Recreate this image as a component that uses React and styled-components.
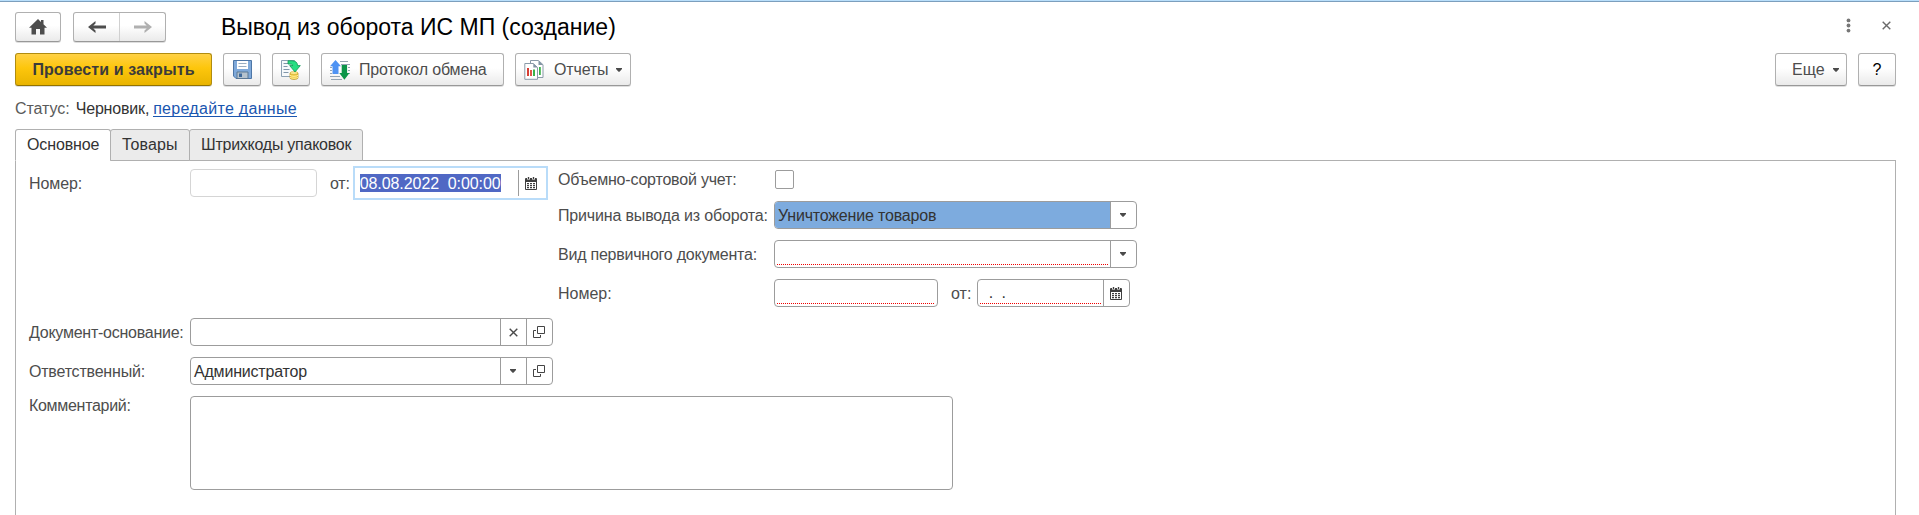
import React from "react";
import styled, { createGlobalStyle } from "styled-components";

const Global = createGlobalStyle`
  * { box-sizing: border-box; }
  body {
    margin: 0;
    background: #fff;
    overflow: hidden;
    font: 16px/20px "Liberation Sans", Arial, sans-serif;
    color: #4d4d4d;
  }
  svg { display: block; flex: none; }
`;

const Window = styled.main`
  display: flex;
  flex-direction: column;
  height: 515px;
  width: 1919px;
  padding: 0 23px 0 15px;
  border-top: 1px solid #b9dffb;
  box-shadow: inset 0 1px 0 #7c9fbd;
`;

const TitleBar = styled.header`
  display: flex;
  align-items: center;
  height: 30px;
  margin-top: 11px;
`;

const Title = styled.h1`
  flex: 1;
  margin: 0 0 0 55px;
  font-size: 23px;
  line-height: 30px;
  font-weight: 400;
  color: #000;
`;

const WindowActions = styled.div`
  display: flex;
  align-items: center;
  gap: 31px;
  padding: 0 5px 3px 0;
`;

const Button = styled.button`
  display: flex;
  align-items: center;
  justify-content: ${(p) => (p.$start ? "flex-start" : "center")};
  width: ${(p) => p.$w}px;
  height: ${(p) => p.$h || 33}px;
  padding: 0 0 0 ${(p) => p.$pl || 0}px;
  border: 1px solid #b0b0b0;
  border-bottom-color: #989898;
  border-radius: 3px;
  background: linear-gradient(#fff 45%, #eaeaea);
  box-shadow: 0 1px 0 #dedede;
  font: inherit;
  color: ${(p) => p.$color || "#4d4d4d"};
  white-space: nowrap;
`;

const PrimaryButton = styled(Button)`
  border-color: #b08c10;
  border-bottom-color: #937300;
  background: linear-gradient(#ffd145, #fdc60c 45%, #e9b400);
  font-weight: 700;
  color: #3b3b3b;
`;

const NavGroup = styled(Button)`
  margin-left: 12px;
`;

const NavHalf = styled.span`
  display: flex;
  flex: 1;
  height: 100%;
  align-items: center;
  justify-content: center;
  & + & { border-left: 1px solid #d0d0d0; }
`;

const Toolbar = styled.div`
  display: flex;
  gap: 11px;
  margin-top: 11px;
`;

const Spacer = styled.div`
  flex: 1;
`;

const Text = styled.span`
  letter-spacing: ${(p) => p.$ls || 0}px;
  margin: 0 ${(p) => p.$mr || 0}px 0 ${(p) => p.$ml || 0}px;
  white-space: pre;
`;

const Status = styled.div`
  display: flex;
  height: 20px;
  margin-top: 13px;
  color: #333;
`;

const StatusLabel = styled(Text)`
  color: #5a5a5a;
`;

const Link = styled.a`
  height: 18px;
  border-bottom: 1px solid #1a56b0;
  color: #1a56b0;
`;

const Tabs = styled.nav`
  display: flex;
  height: 32px;
  margin-top: 10px;
  position: relative;
  z-index: 1;
`;

const Tab = styled.div`
  width: ${(p) => p.$w}px;
  height: 32px;
  margin-right: -1px;
  padding: 5px 0 0 ${(p) => p.$pl}px;
  border: 1px solid #b0b0b0;
  border-bottom-color: ${(p) => (p.$active ? "#fff" : "#b0b0b0")};
  border-radius: 3px 3px 0 0;
  background: ${(p) => (p.$active ? "#fff" : "#ebebeb")};
  color: #333;
  white-space: nowrap;
`;

const Panel = styled.section`
  flex: 1;
  margin-top: -1px;
  padding-left: 12px;
  border: solid #b0b0b0;
  border-width: 1px 1px 0 1px;
`;

const Upper = styled.div`
  display: flex;
  height: 157px;
`;

const LeftColumn = styled.div`
  width: 530px;
  padding-top: 5px;
`;

const RightColumn = styled.div`
  display: flex;
  flex-direction: column;
  gap: 11px;
  padding-top: 8px;
`;

const Row = styled.div`
  display: flex;
  align-items: ${(p) => (p.$top ? "flex-start" : "center")};
  height: ${(p) => p.$h || 28}px;
  margin-bottom: ${(p) => p.$mb || 0}px;
`;

const Label = styled.label`
  width: ${(p) => p.$w}px;
  flex: none;
  padding: ${(p) => (p.$flat ? 0 : 2)}px 0 0 ${(p) => p.$pl || 0}px;
  white-space: nowrap;
  letter-spacing: ${(p) => p.$ls || 0}px;
`;

const FieldText = styled(Text)`
  padding-top: 2px;
`;

const Field = styled.div`
  display: flex;
  width: ${(p) => p.$w}px;
  height: ${(p) => p.$h || 28}px;
  border: 1px solid ${(p) => (p.$muted ? "#d5d5d5" : "#9c9c9c")};
  border-radius: 4px;
  overflow: hidden;
  color: #333;
`;

const Value = styled.div`
  flex: 1;
  display: flex;
  align-items: center;
  padding-left: 3px;
  background: ${(p) => (p.$selected ? "#7dabde" : "transparent")};
`;

const Required = styled(Value)`
  margin: 0 2px 2px;
  background: repeating-linear-gradient(90deg, #f00000 0 1px, #fff 1px 2px) bottom / 100% 1px no-repeat;
`;

const Addon = styled.span`
  display: flex;
  align-items: center;
  justify-content: center;
  width: 26px;
  padding-right: 1px;
  border-left: 1px solid #9c9c9c;
`;

const FocusedDate = styled.div`
  display: flex;
  align-items: center;
  width: 195px;
  height: 34px;
  padding-left: 5px;
  border: 2px solid #b9dcf9;
`;

const Selection = styled.span`
  width: 141px;
  height: 18px;
  line-height: 19px;
  background: #5068c4;
  color: #fff;
  white-space: pre;
  letter-spacing: -0.08px;
`;

const DateButton = styled.span`
  display: flex;
  align-items: center;
  height: 26px;
  margin-left: 17px;
  padding-left: 6px;
  border-left: 1px solid #9c9c9c;
`;

const Checkbox = styled.span`
  width: 19px;
  height: 19px;
  margin-left: 1px;
  border: 1px solid #9c9c9c;
  border-radius: 2px;
`;

const Caret = () => (
  <svg width="6" height="4" viewBox="0 0 6 4"><path d="M0 0h6v1L3.5 3.7h-1L0 1z" fill="#4a4a4a" /></svg>
);

const Cross = ({ color = "#4a4a4a" }) => (
  <svg width="9" height="9" viewBox="0 0 9 9">
    <path d="M.7.7l7.6 7.6M8.3.7L.7 8.3" stroke={color} strokeWidth="1.4" />
  </svg>
);

const OpenIcon = () => (
  <svg width="12" height="12" viewBox="0 0 12 12" fill="none" stroke="#444">
    <path d="M4.5.5h7v7h-7zM3 4.5H.5v7h7V9" />
  </svg>
);

const Calendar = () => (
  <svg width="12" height="13" viewBox="0 0 12 13">
    <path d="M1 1h10q1 0 1 1v10q0 1-1 1H1q-1 0-1-1V2q0-1 1-1z" fill="#3f3f3f" />
    <path d="M1 5h10v7H1z" fill="#fff" />
    <path d="M2 0h3v2.6H2zM7 0h3v2.6H7z" fill="#fff" />
    <path d="M2.8 0h1.4v2H2.8zM7.8 0h1.4v2H7.8z" fill="#3f3f3f" />
    <path d="M2 6h2v1.3H2zM5 6h2v1.3H5zM8 6h2v1.3H8zM2 8h2v1.3H2zM5 8h2v1.3H5zM8 8h2v1.3H8zM2 10h2v1.2H2zM5 10h2v1.2H5zM8 10h2v1.2H8z" fill="#3f3f3f" />
  </svg>
);

const Home = () => (
  <svg width="18" height="16" viewBox="0 0 18 16">
    <path d="M9 0l3 2.9V1h2.5v4.3L18 8.7H15.5V15.5H11V10H7v5.5H2.5V8.7H0z" fill="#4d4d4d" />
  </svg>
);

const Arrow = ({ right }) => (
  <svg width="18" height="14" viewBox="0 0 18 14">
    <path
      d="M7.5 1v2.4L5.3 5.6H18v2.8H5.3l2.2 2.2V13L0 7z"
      fill={right ? "#b0b0b0" : "#4d4d4d"}
      transform={right ? "matrix(-1 0 0 1 18 0)" : undefined}
    />
  </svg>
);

const Dots = () => (
  <svg width="5" height="15" viewBox="0 0 5 15" fill="#777">
    <circle cx="2.5" cy="2.4" r="1.9" /><circle cx="2.5" cy="7.5" r="1.9" /><circle cx="2.5" cy="12.6" r="1.9" />
  </svg>
);

const Save = () => (
  <svg width="19" height="19" viewBox="0 0 19 19">
    <path d="M.5.5h18v18H3L.5 16z" fill="#7fa9da" stroke="#4d76a6" />
    <path d="M4 1h11v8H4z" fill="#fff" />
    <path d="M5.5 3.5h8M5.5 6.5h8" stroke="#9aaec2" />
    <path d="M4 12h11v6.5H4z" fill="#b6c3ce" stroke="#5b7894" />
    <path d="M6 13.5h3V17H6z" fill="#3f6a9c" />
  </svg>
);

const Post = () => (
  <svg width="20" height="20" viewBox="0 0 20 20">
    <path d="M.5.5h13v16H.5z" fill="#f6f9fb" stroke="#8ca1b3" />
    <path d="M2.5 3.5h5M2.5 6.5h4M2.5 9.5h6M2.5 12.5h5" stroke="#8096a9" />
    <path d="M9 13v4.8c0 2.2 8 2.2 8 0V13z" fill="#efc839" stroke="#b99325" strokeWidth=".7" />
    <path d="M9 15.2c1 1.5 7 1.5 8 0M9 17.1c1 1.5 7 1.5 8 0" fill="none" stroke="#fff0a0" />
    <ellipse cx="13" cy="13" rx="4" ry="1.4" fill="#ffec96" stroke="#c9a42c" strokeWidth=".6" />
    <path d="M7 .8h4Q16.3.8 16.6 5.6h2.7L14 12 8.7 5.6H12Q11.5 3.6 7 4z" fill="#27df83" stroke="#129756" strokeWidth=".8" />
  </svg>
);

const Exchange = () => (
  <svg width="20" height="20" viewBox="0 0 20 20">
    <path d="M10 1.5h8M11 4.5h9M18 7.5h2M18 10.5h2M19 13.5h1M0 7.5h2M0 10.5h2M0 13.5h2M0 16.5h10M1 19.5h11" stroke="#94a4b2" />
    <path d="M5.5 0L11 6.2H8.5V14H2.5V6.2H0z" fill="#4f93f3" />
    <path d="M11.7 5h5.4v8h2.4L14.4 19.8 9.3 13h2.4z" fill="#0b9448" />
  </svg>
);

const Reports = () => (
  <svg width="20" height="20" viewBox="0 0 20 20">
    <path d="M6.5.5h8l4.5 4.2v12.8H6.5z" fill="#fff" stroke="#8a9aa8" />
    <path d="M14.5.5V5H19z" fill="#8496a5" />
    <path d="M15 7h1.8v8H15z" fill="#3bb34a" />
    <path d="M.8 3.5h8.5l4.2 4v11.8H.8z" fill="#fff" stroke="#8a9aa8" />
    <path d="M9.3 3.5v4h4.2z" fill="#8496a5" />
    <path d="M3 8h2v8H3z" fill="#d63f36" /><path d="M6 10h2v6H6z" fill="#e0564a" /><path d="M9 9.5h2V16H9z" fill="#3bb34a" />
  </svg>
);

export default function App() {
  return (
    <Window>
      <Global />
      <TitleBar>
        <Button $w={46} $h={30}><Home /></Button>
        <NavGroup $w={93} $h={30}>
          <NavHalf><Arrow /></NavHalf>
          <NavHalf><Arrow right /></NavHalf>
        </NavGroup>
        <Title>Вывод из оборота ИС МП (создание)</Title>
        <WindowActions>
          <Dots />
          <Cross color="#6a6a6a" />
        </WindowActions>
      </TitleBar>

      <Toolbar>
        <PrimaryButton $w={197}><Text $ls={0.1}>Провести и закрыть</Text></PrimaryButton>
        <Button $w={38}><Save /></Button>
        <Button $w={38}><Post /></Button>
        <Button $w={183} $start $pl={8}><Exchange /><Text $ml={9} $ls={-0.15}>Протокол обмена</Text></Button>
        <Button $w={116} $start $pl={8}><Reports /><Text $ml={10} $mr={8} $ls={-0.16}>Отчеты</Text><Caret /></Button>
        <Spacer />
        <Button $w={72} $start $pl={16}><Text $mr={8}>Еще</Text><Caret /></Button>
        <Button $w={38} $color="#000">?</Button>
      </Toolbar>

      <Status>
        <StatusLabel $mr={6} $ls={-0.05}>Статус:</StatusLabel>
        <Text $mr={4} $ls={-0.18}>Черновик,</Text>
        <Link><Text $ls={0.3}>передайте данные</Text></Link>
      </Status>

      <Tabs>
        <Tab $w={96} $pl={11} $active><Text $ls={-0.12}>Основное</Text></Tab>
        <Tab $w={80} $pl={11}><Text $ls={0.1}>Товары</Text></Tab>
        <Tab $w={174} $pl={11}><Text $ls={-0.25}>Штрихкоды упаковок</Text></Tab>
      </Tabs>

      <Panel>
        <Upper>
          <LeftColumn>
            <Row $h={34}>
              <Label $w={162} $pl={1} $ls={-0.1}>Номер:</Label>
              <Field $w={127} $muted />
              <FieldText $ml={13} $mr={3} $ls={-0.2}>от:</FieldText>
              <FocusedDate>
                <Selection>08.08.2022  0:00:00</Selection>
                <DateButton><Calendar /></DateButton>
              </FocusedDate>
            </Row>
          </LeftColumn>
          <RightColumn>
            <Row $h={21}><Label $w={216} $flat $ls={-0.2}>Объемно-сортовой учет:</Label><Checkbox /></Row>
            <Row>
              <Label $w={216} $ls={-0.16}>Причина вывода из оборота:</Label>
              <Field $w={363}><Value $selected><FieldText $ls={-0.18}>Уничтожение товаров</FieldText></Value><Addon><Caret /></Addon></Field>
            </Row>
            <Row>
              <Label $w={216} $ls={-0.23}>Вид первичного документа:</Label>
              <Field $w={363}><Required /><Addon><Caret /></Addon></Field>
            </Row>
            <Row>
              <Label $w={216}>Номер:</Label>
              <Field $w={164}><Required /></Field>
              <FieldText $ml={13} $mr={6}>от:</FieldText>
              <Field $w={153}><Required><FieldText $ml={-3} $ls={-0.2}>{"  .  ."}</FieldText></Required><Addon><Calendar /></Addon></Field>
            </Row>
          </RightColumn>
        </Upper>
        <Row $mb={11}>
          <Label $w={162} $pl={1} $ls={-0.25}>Документ-основание:</Label>
          <Field $w={363}><Value /><Addon><Cross /></Addon><Addon><OpenIcon /></Addon></Field>
        </Row>
        <Row $mb={11}>
          <Label $w={162} $pl={1} $ls={-0.2}>Ответственный:</Label>
          <Field $w={363}><Value><FieldText $ls={-0.2}>Администратор</FieldText></Value><Addon><Caret /></Addon><Addon><OpenIcon /></Addon></Field>
        </Row>
        <Row $top $h={94}>
          <Label $w={162} $pl={1} $flat $ls={-0.3}>Комментарий:</Label>
          <Field $w={763} $h={94} />
        </Row>
      </Panel>
    </Window>
  );
}
